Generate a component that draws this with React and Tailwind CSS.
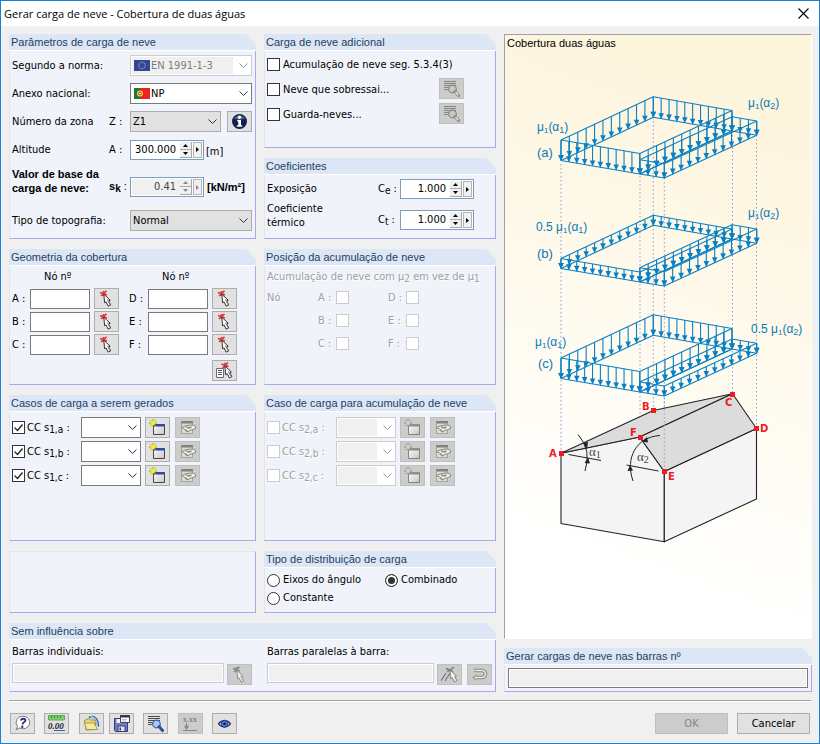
import clsx from "clsx";

const SANS = "font-['DejaVu_Sans_Condensed',Tahoma,sans-serif]";
const ARIAL = "font-['Liberation_Sans',Arial,sans-serif]";

/* ---------- icons ---------- */

function Icon({ children, className }) {
  return (
    <svg width="17" height="17" viewBox="0 0 17 17" fill="none" className={clsx("block", className)}>
      {children}
    </svg>
  );
}

function PickIcon({ muted }) {
  const star = muted ? "#8a8a8a" : "#e03a3a";
  return (
    <Icon>
      <path d="M2 2.500l7 2.500M8.500.800L3 6M5.500 1v5" stroke={star} strokeWidth="1.700" />
      <path d="M5.800 4.200l6.400 6-1.500.7 2 4-2.600 1.200-2-4.200-1.500.9z"
        fill={muted ? "#eeeeea" : "#fff"} stroke={muted ? "#8f8f88" : "#333"} strokeWidth="1" />
      <path d="M9.500 9.500l2.500 5" stroke={muted ? "#b5b5ac" : "#8a8a8a"} strokeWidth="1.300" />
    </Icon>
  );
}

function PickListIcon() {
  return (
    <Icon>
      <path d="M5.500 2l7 2.500M12 .5L6.500 6M9 .8v5" stroke="#e03a3a" strokeWidth="1.700" />
      <path d="M.5 6.500h7v9h-7z" fill="#fff" stroke="#6d6d6d" />
      <path d="M2 8.500h4M2 10.500h4M2 12.500h4" stroke="#555" />
      <path d="M9 4l6.400 6-1.500.7 2 4-2.600 1.200-2-4.200-1.800.9z" fill="#fff" stroke="#333" />
      <path d="M12.500 9.500l2.300 4.500" stroke="#8a8a8a" strokeWidth="1.300" />
    </Icon>
  );
}

function ListSearchIcon({ muted }) {
  const line = muted ? "#858585" : "#4a4a4a";
  return (
    <Icon>
      <path d="M1 1.500h12M1 3.500h12M1 5.500h12M1 7.500h5M1 9.500h4" stroke={line} strokeWidth="1" />
      <circle cx="9.500" cy="9" r="3.800" fill={muted ? "#c8c8c0" : "#a9c6f5"} stroke={muted ? "#85857c" : "#3c5f9e"} strokeWidth="1.200" />
      <path d="M12.200 11.700l3.300 3.800" stroke={muted ? "#85857c" : "#2f4f9a"} strokeWidth="3" strokeLinecap="round" />
      {muted && <path d="M12.500 12l2.800 3.200" stroke="#ecece6" strokeWidth="1.400" />}
    </Icon>
  );
}

function InfoIcon() {
  return (
    <Icon>
      <circle cx="8.500" cy="8.500" r="7.500" fill="#14204a" />
      <path d="M3 5.500a6.500 6.500 0 0 1 11 0c-2 1.500-9 1.500-11 0z" fill="#4a5d8c" />
      <circle cx="8.500" cy="4.300" r="1.700" fill="#fff" />
      <path d="M6.200 7h3.800v5.300h1.200v1.400H5.800v-1.400h1.500V8.400H6.200z" fill="#fff" />
    </Icon>
  );
}

function NewCaseIcon({ muted }) {
  return (
    <Icon>
      <defs>
        <linearGradient id="caseFill" x1="0" y1="0" x2="1" y2="1">
          <stop offset="0" stopColor="#fff" />
          <stop offset="1" stopColor="#c4c4be" />
        </linearGradient>
      </defs>
      <path d="M4.500 5.500h11v10h-11z" fill="url(#caseFill)" stroke={muted ? "#85857c" : "#45454a"} />
      <path d="M4 5h12v2.500H4z" fill={muted ? "#8f8f86" : "#2f4aa6"} />
      <path d="M4 0v8M0 4h8M1.200 1.200l5.600 5.600M6.800 1.200L1.200 6.800" stroke={muted ? "#8b8b82" : "#a8a51a"} />
      <circle cx="4" cy="4" r="2.200" fill={muted ? "#cfcfc8" : "#fff200"} />
    </Icon>
  );
}

function EditCaseIcon() {
  return (
    <Icon>
      <path d="M2.500 2.500h11v12h-11z" fill="#dcdcd4" stroke="#a5a59c" />
      <path d="M2 2h12v2.500H2z" fill="#83837a" />
      <path d="M2.500 8.500l5-2 6.500-.5 2.500 1.500v2L13 11h-2l-2 2-3.500-3z" fill="#f0f0e8" stroke="#85857c" />
      <path d="M7 8l3 1 2.500-1M6 10.500l3 2.500" stroke="#85857c" strokeWidth="1.400" />
    </Icon>
  );
}

function HelpIcon() {
  return (
    <Icon>
      <path d="M9 1.200a6.800 6.300 0 1 1-3.400 11.800L2 14.800l1.500-3.400A6.600 6.300 0 0 1 9 1.200z" fill="#fff" stroke="#7c7c7c" />
      <path d="M6.800 5.400c.6-2.300 5-2.200 4.600.2-.3 1.600-2.700 1.500-2.900 3.900" stroke="#26367e" strokeWidth="1.900" />
      <circle cx="8.300" cy="11.700" r="1.200" fill="#26367e" />
    </Icon>
  );
}

function UnitsIcon() {
  return (
    <Icon>
      <path d="M.5.5h16v4.500H.5z" fill="#7ccf6f" stroke="#5fae55" />
      <path d="M3.500 1v2M6.500 1v2M9.500 1v2M12.500 1v2" stroke="#3f8a3a" />
      <text x="0" y="14" fontSize="9" fontStyle="italic" fontWeight="bold" fill="#1f2430" fontFamily="Liberation Serif, serif">0.00</text>
      <path d="M6 15.500h11" stroke="#3f62b5" />
    </Icon>
  );
}

function OpenIcon() {
  return (
    <Icon>
      <path d="M6 2.500c5-2.500 9 .5 9.500 9" stroke="#2d4f8f" strokeWidth="1.500" />
      <path d="M7.500 2.200c4 0 6 3 6.500 8" stroke="#9cc0f0" strokeWidth="2.200" />
      <path d="M1.500 5.500l4-2 2 1.500h4.500l1 9.500-10 .5z" fill="#ead67c" stroke="#a48e3c" />
      <path d="M1.500 8h9.500l3.500 6.500H3.500z" fill="#f6ea9e" stroke="#b19c45" />
    </Icon>
  );
}

function SaveIcon() {
  return (
    <Icon>
      <path d="M1.500 3.500h13v13h-12l-1-1z" fill="#6f7ccb" stroke="#35397a" />
      <path d="M5 11h7v5.500H5z" fill="#e6e6f2" stroke="#35397a" />
      <path d="M6.500 12.500h1.500v3H6.500z" fill="#35397a" />
      <path d="M3.500 4h7v4h-7z" fill="#f3f3fa" />
      <path d="M7.500.5h9v7h-9z" fill="#fff" stroke="#444" />
      <path d="M7 .5h10v2H7z" fill="#30364e" />
      <path d="M9 4.500h5M9 6h4" stroke="#bbb" />
    </Icon>
  );
}

function ValuesIcon() {
  return (
    <svg width="21" height="19" viewBox="0 0 21 19" fill="none" className="block">
      <text x="3" y="8" fontSize="8" fontWeight="bold" fill="#85857e" fontFamily="Liberation Serif, serif">x.xx</text>
      <path d="M6.500 9v5M4.500 12l2 3.500 2-3.500zM3 16.500h14" stroke="#85857e" />
    </svg>
  );
}

function EyeIcon() {
  return (
    <Icon>
      <path d="M2.500 8.800C5 4.500 12 4.500 14.500 8.800 12 13 5 13 2.500 8.800z" fill="#c9d6f8" stroke="#20243c" strokeWidth="1.200" />
      <circle cx="8.500" cy="8.700" r="3.500" fill="#4b7bea" stroke="#1c3588" />
      <circle cx="8.500" cy="8.700" r="1.300" fill="#0b1020" />
    </Icon>
  );
}

function ParallelIcon() {
  return (
    <Icon>
      <path d="M0 15L5 7M4 15l5-8" stroke="#7c7c75" strokeWidth="1.200" />
      <path d="M5 2.500l7 3M13 1L6 6" stroke="#7c7c75" strokeWidth="1.500" />
      <path d="M9 4l6.400 6-1.500.7 2 4-2.600 1.200-2-4.200-1.800.9z" fill="#eeeeea" stroke="#85857e" />
    </Icon>
  );
}

function ReverseIcon() {
  return (
    <Icon>
      <path d="M3 4.500h8a3.300 3.300 0 0 1 0 7H5" stroke="#85857e" strokeWidth="3.600" />
      <path d="M5.500 8v7L1 11.500z" fill="#a5a59c" />
      <path d="M3.500 4.500H11a3.300 3.300 0 0 1 0 7H4" stroke="#ecece4" strokeWidth="1.600" />
    </Icon>
  );
}

function FlagEU() {
  return (
    <svg width="16" height="11" viewBox="0 0 16 11">
      <path d="M0 0h16v11H0z" fill="#3145a0" />
      <circle cx="8" cy="5.500" r="3.200" fill="none" stroke="#d8cd52" strokeDasharray="1 0.700" />
    </svg>
  );
}

function FlagPT() {
  return (
    <svg width="16" height="11" viewBox="0 0 16 11">
      <path d="M0 0h16v11H0z" fill="#e8251f" />
      <path d="M0 0h6v11H0z" fill="#1d7a35" />
      <circle cx="6" cy="5.500" r="3" fill="#f3dd3c" />
      <circle cx="6" cy="5.500" r="1.400" fill="#fff" stroke="#d22" />
    </svg>
  );
}

/* ---------- controls ---------- */

function Group({ title, wide, className, children }) {
  return (
    <section className={clsx("flex flex-col bg-[#f0f3f9] text-black", className)}>
      {title && (
        <div className="bg-[#f0f0f0]">
          <h2 className={clsx(ARIAL, "h-[17px] border-b border-white bg-[#dce6f4] pl-[2px] text-[11px] leading-4 text-[#1d3f66] [clip-path:polygon(0_0,calc(100%-10px)_0,100%_10px,100%_100%,0_100%)]")}>
            {title}
          </h2>
        </div>
      )}
      <div className={clsx("grow border-r border-b border-l border-r-[#a8a8ee] border-b-[#a8a8ee] border-l-[#dce6f4]", !title && "border-t border-t-[#dce6f4]", wide)}>
        {children}
      </div>
    </section>
  );
}

function IconButton({ label, disabled, className, children }) {
  return (
    <button
      type="button"
      aria-label={label}
      disabled={disabled}
      className={clsx("flex h-[21px] w-[25px] shrink-0 items-center justify-center border border-[#adadad] bg-[#e1e1e1] disabled:border-[#bfbfbf] disabled:bg-[#cccccc]", className)}
    >
      {children}
    </button>
  );
}

function Select({ id, label, value, flag, tone = "white", disabled, className }) {
  return (
    <div className={clsx("relative h-[21px]", className)}>
      <select
        id={id}
        aria-label={label}
        disabled={disabled}
        className={clsx(
          "block h-full w-full appearance-none border pr-4 opacity-100",
          flag ? "pl-5" : "pl-[2px]",
          disabled ? "border-[#cccccc] bg-white text-[#7d7d7d]" : "text-black",
          !disabled && tone === "white" && "border-[#7a7a7a] bg-white",
          !disabled && tone === "gray" && "border-[#adadad] bg-[#e1e1e1]",
          disabled && "bg-linear-to-r from-[#f0f0f0] from-[calc(100%-18px)] to-white to-[calc(100%-18px)] shadow-[inset_0_0_0_1px_#fff]"
        )}
      >
        <option>{value}</option>
      </select>
      {flag && <span className="pointer-events-none absolute top-[5px] left-1">{flag}</span>}
      <svg width="9" height="5" viewBox="0 0 9 5" className="pointer-events-none absolute top-2 right-1" fill="none">
        <path d="M.5.500l4 4 4-4" stroke={disabled ? "#9a9a9a" : "#333"} />
      </svg>
    </div>
  );
}

function Spinner({ id, label, value, disabled }) {
  const ink = disabled ? "#8a8a8a" : "#000";
  return (
    <div className="flex h-5 w-[74px] shrink-0 border border-[#7f9db9] bg-white p-px">
      <input
        id={id}
        aria-label={label}
        defaultValue={value}
        disabled={disabled}
        className="w-0 min-w-0 grow bg-white pr-1 text-right disabled:bg-[#f0f0f0] disabled:text-[#444]"
      />
      <div className="flex w-3 flex-col">
        <button type="button" aria-label="Aumentar" disabled={disabled} className="flex h-2 items-center justify-center border-r border-b border-[#a8a8a8] bg-[#f0f0f0]">
          <svg width="5" height="3" viewBox="0 0 5 3"><path d="M0 3L2.500 0 5 3z" fill={ink} /></svg>
        </button>
        <button type="button" aria-label="Diminuir" disabled={disabled} className="flex h-2 items-center justify-center border-r border-b border-[#a8a8a8] bg-[#f0f0f0]">
          <svg width="5" height="3" viewBox="0 0 5 3"><path d="M0 0l2.500 3L5 0z" fill={ink} /></svg>
        </button>
      </div>
      <button type="button" aria-label="Mais" disabled={disabled} className="ml-px flex w-[9px] items-center justify-center border border-[#b4b4b4] bg-[#f0f0f0]">
        <svg width="3" height="5" viewBox="0 0 3 5"><path d="M0 0l3 2.500L0 5z" fill={ink} /></svg>
      </button>
    </div>
  );
}

function Check({ id, checked, disabled }) {
  return (
    <span className="relative block size-[13px] shrink-0">
      <input
        id={id}
        type="checkbox"
        defaultChecked={checked}
        disabled={disabled}
        className="peer block size-full appearance-none border border-[#333] bg-white disabled:border-[#cccccc]"
      />
      <svg viewBox="0 0 13 13" className="pointer-events-none absolute inset-0 hidden peer-checked:block" fill="none">
        <path d="M2.500 6.500l3 3 5-6" stroke="#222" strokeWidth="1.300" />
      </svg>
    </span>
  );
}

function Radio({ id, label, checked }) {
  return (
    <div className="flex h-[18px] items-center gap-[3px]">
      <input
        id={id}
        type="radio"
        name="distribuicao"
        defaultChecked={checked}
        className="size-[13px] appearance-none rounded-full border border-[#333] bg-white checked:bg-[#333] checked:shadow-[inset_0_0_0_2px_#fff]"
      />
      <label htmlFor={id}>{label}</label>
    </div>
  );
}

function Sub({ children }) {
  return <span className="relative top-[2px] text-[10px]">{children}</span>;
}

const DISABLED_TEXT = "text-[#a0a0a0] [text-shadow:1px_1px_0_#fff]";

/* ---------- groups ---------- */

const paramRow = "grid grid-cols-[97px_21px_1fr] items-center";

function SnowParameters() {
  return (
    <Group title="Parâmetros de carga de neve" wide="flex flex-col gap-[7px] pt-1 pr-[3px] pb-[7px] pl-[2px]">
      <div className={paramRow}>
        <label htmlFor="norma" className="col-span-2">Segundo a norma:</label>
        <Select id="norma" value="EN 1991-1-3" flag={<FlagEU />} disabled />
      </div>
      <div className={paramRow}>
        <label htmlFor="anexo" className="col-span-2">Anexo nacional:</label>
        <Select id="anexo" value="NP" flag={<FlagPT />} />
      </div>
      <div className={paramRow}>
        <label htmlFor="zona">Número da zona</label>
        <span>Z :</span>
        <div className="flex justify-between gap-[6px]">
          <Select id="zona" value="Z1" tone="gray" className="grow" />
          <IconButton label="Informação da zona"><InfoIcon /></IconButton>
        </div>
      </div>
      <div className={paramRow}>
        <label htmlFor="altitude">Altitude</label>
        <span>A :</span>
        <div className="flex h-[21px] items-center gap-[2px]">
          <Spinner id="altitude" value="300.000" />
          <span className="pt-1">[m]</span>
        </div>
      </div>
      <div className={clsx(ARIAL, "grid h-[30px] grid-cols-[97px_21px_1fr] items-end font-bold")}>
        <label htmlFor="sk" className="self-start leading-[14px]">Valor de base da<br />carga de neve:</label>
        <span className="pb-[3px]">s<Sub>k</Sub> <span className="font-normal">:</span></span>
        <div className="flex items-center gap-[3px]">
          <div className={clsx(SANS, "font-normal")}><Spinner id="sk" value="0.41" disabled /></div>
          <span>[kN/m²]</span>
        </div>
      </div>
      <div className={clsx(paramRow, "mt-[6px]")}>
        <label htmlFor="topografia" className="col-span-2">Tipo de topografia:</label>
        <Select id="topografia" value="Normal" tone="gray" />
      </div>
    </Group>
  );
}

function AdditionalSnow() {
  const items = [
    { id: "acum", text: "Acumulação de neve seg. 5.3.4(3)" },
    { id: "sobressai", text: "Neve que sobressai...", details: true },
    { id: "guarda", text: "Guarda-neves...", details: true },
  ];
  return (
    <Group title="Carga de neve adicional" className="grow" wide="pt-px pr-[31px] pl-[2px]">
      {items.map((item) => (
        <div key={item.id} className="flex h-[25px] items-center gap-[3px]">
          <Check id={item.id} />
          <label htmlFor={item.id} className="grow whitespace-nowrap">{item.text}</label>
          {item.details && <IconButton label={`Detalhes ${item.text}`} disabled className="mb-[3px]"><ListSearchIcon muted /></IconButton>}
        </div>
      ))}
    </Group>
  );
}

function Coefficients() {
  return (
    <Group title="Coeficientes" wide="flex flex-col gap-[3px] pt-1 pr-[21px] pb-2 pl-[2px]">
      <div className="grid grid-cols-[1fr_22px_74px] items-center">
        <label htmlFor="ce">Exposição</label>
        <span>C<Sub>e</Sub> :</span>
        <Spinner id="ce" value="1.000" />
      </div>
      <div className="grid h-7 grid-cols-[1fr_22px_74px] items-end">
        <label htmlFor="ct" className="self-start">Coeficiente<br />térmico</label>
        <span className="leading-5">C<Sub>t</Sub> :</span>
        <Spinner id="ct" value="1.000" />
      </div>
    </Group>
  );
}

function NodeField({ name }) {
  return (
    <>
      <label htmlFor={`no-${name}`}>{name} :</label>
      <input id={`no-${name}`} className="h-5 w-[60px] border border-[#7a7a7a] bg-white px-1" />
      <IconButton label={`Selecionar nó ${name}`}><PickIcon /></IconButton>
    </>
  );
}

function RoofGeometry() {
  return (
    <Group title="Geometria da cobertura" wide="pt-[3px] pb-[3px] pl-[2px]">
      <div className="grid grid-cols-[18px_64px_35px_19px_64px_25px] items-center gap-y-[2px]">
        <span className="col-start-2 h-[17px] pl-[14px] leading-4">Nó nº</span>
        <span className="col-span-2 col-start-5 h-[17px] pl-[14px] leading-4">Nó nº</span>
        <NodeField name="A" /><NodeField name="D" />
        <NodeField name="B" /><NodeField name="E" />
        <NodeField name="C" /><NodeField name="F" />
        <div className="col-start-6 mt-[3px]">
          <IconButton label="Selecionar vários nós"><PickListIcon /></IconButton>
        </div>
      </div>
    </Group>
  );
}

function AccumulationPosition() {
  const rows = [["A", "D"], ["B", "E"], ["C", "F"]];
  return (
    <Group title="Posição da acumulação de neve" wide={clsx("pt-[3px] pl-[2px]", DISABLED_TEXT)}>
      <p className="h-[17px] leading-4 whitespace-nowrap">
        Acumulação de neve com μ<Sub>2</Sub> em vez de μ<Sub>1</Sub>
      </p>
      {rows.map((row, i) => (
        <div key={row[0]} className="grid h-[23px] grid-cols-[51px_18px_52px_18px_13px] items-center">
          <span>{i === 0 && "Nó"}</span>
          {row.map((n) => [
            <label key={n} htmlFor={`acum-${n}`}>{n} :</label>,
            <Check key={`${n}-box`} id={`acum-${n}`} disabled />,
          ])}
        </div>
      ))}
    </Group>
  );
}

function LoadCases({ title, index, disabled }) {
  return (
    <Group title={title} className="min-h-[146px]" wide="flex flex-col gap-[3px] pt-[5px] pl-[2px]">
      {["a", "b", "c"].map((k) => (
        <div key={k} className="flex h-[21px] items-center">
          <Check id={`cc-${index}${k}`} checked={!disabled} disabled={disabled} />
          <label htmlFor={`cc-${index}${k}`} className={clsx("ml-[2px] w-[54px] whitespace-nowrap", disabled && DISABLED_TEXT)}>
            CC s<Sub>{index},{k}</Sub> :
          </label>
          <Select label={`Caso de carga ${index}${k}`} value="" disabled={disabled} className="mr-1 w-[60px]" />
          <div className="flex gap-[5px]">
            <IconButton label="Novo caso" disabled={disabled}><NewCaseIcon muted={disabled} /></IconButton>
            <IconButton label="Editar caso" disabled><EditCaseIcon /></IconButton>
          </div>
        </div>
      ))}
    </Group>
  );
}

function NoInfluence() {
  const field = "h-5 min-w-0 grow border border-[#cccccc] bg-[#f0f0f0] shadow-[inset_0_0_0_1px_#fff]";
  return (
    <Group title="Sem influência sobre" className="col-span-2" wide="pt-1 pb-[6px]">
      <div className="grid grid-cols-[247fr_232fr] gap-2">
        <div className="pl-[2px]">
          <label htmlFor="individuais" className="mb-[3px] block leading-4">Barras individuais:</label>
          <div className="flex items-start gap-[3px] pr-1">
            <input id="individuais" disabled className={field} />
            <IconButton label="Selecionar barras" disabled className="mt-px"><PickIcon muted /></IconButton>
          </div>
        </div>
        <div className="pl-[3px]">
          <label htmlFor="paralelas" className="mb-[3px] block leading-4">Barras paralelas à barra:</label>
          <div className="flex items-start gap-[3px] pr-[3px]">
            <input id="paralelas" disabled className={field} />
            <div className="flex gap-[5px] pt-px">
              <IconButton label="Selecionar paralelas" disabled><ParallelIcon /></IconButton>
              <IconButton label="Inverter" disabled><ReverseIcon /></IconButton>
            </div>
          </div>
        </div>
      </div>
    </Group>
  );
}

/* ---------- roof drawing ---------- */

const BASE = {
  A: [561, 160.5],
  B: [653.3, 117.3],
  C: [732, 131],
  D: [756.7, 135.3],
  E: [664.3, 178],
  F: [639.8, 174],
};

function LoadEdge({ from, to, h, n, dy }) {
  const [x1, y1] = BASE[from];
  const [x2, y2] = BASE[to];
  const arrows = Array.from({ length: n + 1 }, (_, i) => [x1 + ((x2 - x1) * i) / n, y1 + dy + ((y2 - y1) * i) / n]);
  return (
    <g>
      <path d={`M${x1} ${y1 + dy}L${x2} ${y2 + dy}M${x1} ${y1 + dy - h}L${x2} ${y2 + dy - h}`} />
      {arrows.map(([x, y], i) => (
        <g key={i}>
          <path d={`M${x} ${y - h}V${y}`} />
          <path d={`M${x - 2.8} ${y - 5.5}h5.6L${x} ${y + 0.3}z`} fill="#0a80c4" stroke="none" />
        </g>
      ))}
    </g>
  );
}

function SnowLoad({ dy, left, right }) {
  return (
    <g stroke="#0a80c4" strokeWidth="1.100" fill="none">
      <LoadEdge from="A" to="B" h={left} n={11} dy={dy} />
      <LoadEdge from="B" to="C" h={left} n={10} dy={dy} />
      <LoadEdge from="A" to="F" h={left} n={10} dy={dy} />
      <LoadEdge from="F" to="C" h={left} n={11} dy={dy} />
      <LoadEdge from="F" to="C" h={right} n={11} dy={dy} />
      <LoadEdge from="C" to="D" h={right} n={3} dy={dy} />
      <LoadEdge from="F" to="E" h={right} n={3} dy={dy} />
      <LoadEdge from="E" to="D" h={right} n={11} dy={dy} />
    </g>
  );
}

function Mu({ x, y, factor, slope }) {
  return (
    <text x={x} y={y}>
      {factor && `${factor} `}μ<tspan fontSize="8" dy="2">1</tspan>
      <tspan dy="-2">(α</tspan>
      <tspan fontSize="9" dy="2">{slope}</tspan>
      <tspan dy="-2">)</tspan>
    </text>
  );
}

const CORNERS = [
  ["A", 561, 453, 549, 457],
  ["B", 653, 410, 642, 410],
  ["C", 732, 394, 725, 406],
  ["D", 756, 428, 760, 432],
  ["E", 664, 471, 668, 480],
  ["F", 640, 437, 630, 436],
];

function RoofDrawing() {
  return (
    <svg viewBox="505 51 306 587" className="block w-full">
      <g stroke="#8d9bd6" strokeWidth="1" strokeDasharray="1.500 2.500">
        <path d="M561 164V453M640 176V437M653.300 117V410M664.300 178V471M732.500 131V394M756.500 135V428" />
      </g>
      <SnowLoad dy={0} left={20.5} right={14.3} />
      <SnowLoad dy={108} left={10} right={14.3} />
      <SnowLoad dy={218} left={20.5} right={10} />
      <g stroke="#222" strokeWidth="1.100" strokeLinejoin="round">
        <path d="M561 453.300L639.700 437 664.300 471.500V541.700L561 523.500z" fill="#f4f4f4" />
        <path d="M664.300 471.500L756.500 428.500V499L664.300 541.700z" fill="#f4f4f4" />
        <path d="M561 453.300L653.300 410.500 732.500 393.700 639.700 437z" fill="#dcdcdc" />
        <path d="M639.700 437L732.500 393.700 756.500 428.500 664.300 471.500z" fill="#dcdcdc" />
      </g>
      <path d="M664.300 397V471" stroke="#8d9bd6" strokeDasharray="1.500 2.500" />
      <g stroke="#222" fill="none">
        <path d="M578 434.500Q592 450 585 471M568.500 454.500L601 460.500" />
        <path d="M660 435.500C636 437 625 458 633 481M626.500 465L658.500 471" />
      </g>
      <g fill="#222">
        <path d="M583 443l5-1-1 7z" />
        <path d="M584.500 463l5.500.5-2-6z" />
        <path d="M647 437l1 5.500-6-1z" />
        <path d="M627.500 471l5.500-.5-3-5.500z" />
      </g>
      <g fill="#444" fontSize="13" fontFamily="Liberation Serif, serif">
        <text x="589" y="456">α<tspan fontSize="10" dy="2">1</tspan></text>
        <text x="637" y="461">α<tspan fontSize="10" dy="2">2</tspan></text>
      </g>
      <g fill="#ed1c24" fontSize="10" fontWeight="bold" fontFamily="DejaVu Sans, sans-serif">
        {CORNERS.map(([name, x, y, tx, ty]) => (
          <g key={name}>
            <rect x={x - 2} y={y - 2} width="5" height="5" />
            <text x={tx} y={ty}>{name}</text>
          </g>
        ))}
      </g>
      <g fill="#0a7ab8" fontSize="12" fontFamily="Liberation Sans, sans-serif">
        <Mu x={537} y={131} slope="1" />
        <Mu x={748} y={107} slope="2" />
        <text x="537" y="157" fontSize="13">(a)</text>
        <Mu x={536} y={231} factor="0.5" slope="1" />
        <Mu x={748} y={217} slope="2" />
        <text x="537" y="258" fontSize="13">(b)</text>
        <Mu x={535} y={346} slope="1" />
        <Mu x={751} y={333} factor="0.5" slope="2" />
        <text x="538" y="368" fontSize="13">(c)</text>
      </g>
    </svg>
  );
}

/* ---------- window ---------- */

function Footer() {
  const action = "h-[21px] w-[73px] border border-[#adadad] bg-[#e1e1e1] disabled:border-[#bfbfbf] disabled:bg-[#cccccc] disabled:text-[#838383]";
  return (
    <footer className="mt-2 mr-2 ml-2 flex items-center justify-between border-t border-[#a0a0a0] pt-3 pr-px pb-2 pl-px shadow-[inset_0_1px_0_#fff]">
      <div className="flex gap-[9px]">
        <IconButton label="Ajuda"><HelpIcon /></IconButton>
        <IconButton label="Unidades"><UnitsIcon /></IconButton>
        <div className="ml-px flex gap-[5px]">
          <IconButton label="Abrir"><OpenIcon /></IconButton>
          <IconButton label="Salvar"><SaveIcon /></IconButton>
        </div>
        <IconButton label="Detalhes"><ListSearchIcon /></IconButton>
        <div className="ml-px flex"><IconButton label="Valores" disabled><ValuesIcon /></IconButton></div>
        <IconButton label="Visualizar"><EyeIcon /></IconButton>
      </div>
      <div className="flex gap-[9px]">
        <button type="button" disabled className={action}>OK</button>
        <button type="button" className={action}>Cancelar</button>
      </div>
    </footer>
  );
}

export default function App() {
  return (
    <main className={clsx(SANS, "min-h-screen border border-[#1883d7] bg-[#f0f0f0] text-[11px] leading-[14px] text-black")}>
      <header className="flex h-[25px] items-center justify-between bg-white pr-[10px] pl-[3px]">
        <h1 className="font-['Open_Sans','Noto_Sans',sans-serif] text-[11px]">Gerar carga de neve - Cobertura de duas águas</h1>
        <button type="button" aria-label="Fechar">
          <svg width="11" height="11" viewBox="0 0 11 11"><path d="M.5.500l10 10M10.500.500l-10 10" stroke="#000" strokeWidth="1.100" /></svg>
        </button>
      </header>

      <div className="grid grid-cols-[487fr_308fr] gap-2 pt-2 pr-[7px] pl-2">
        <div className="grid grid-cols-[247fr_232fr] content-start gap-x-2 gap-y-[10px]">
          <SnowParameters />
          <div className="flex flex-col gap-[10px]">
            <AdditionalSnow />
            <Coefficients />
          </div>
          <RoofGeometry />
          <AccumulationPosition />
          <LoadCases title="Casos de carga a serem gerados" index="1" />
          <LoadCases title="Caso de carga para acumulação de neve" index="2" disabled />
          <Group />
          <Group title="Tipo de distribuição de carga" wide="grid grid-cols-[118px_1fr] content-start pt-[3px] pb-[5px] pl-[2px]">
            <Radio id="eixos" label="Eixos do ângulo" />
            <Radio id="combinado" label="Combinado" checked />
            <Radio id="constante" label="Constante" />
          </Group>
          <NoInfluence />
        </div>

        <div className="flex flex-col gap-[9px]">
          <figure className="grow border border-t-[#a0a0a0] border-r-white border-b-white border-l-[#a0a0a0] bg-[linear-gradient(20deg,#fff_15%,#fefaee_50%,#fdf4dc_90%)]">
            <figcaption className={clsx(ARIAL, "h-4 pl-[2px] leading-4")}>Cobertura duas águas</figcaption>
            <RoofDrawing />
          </figure>
          <Group title="Gerar cargas de neve nas barras nº" wide="p-[3px]">
            <input aria-label="Gerar cargas de neve nas barras nº" className="block h-5 w-full border border-[#7a7a7a] bg-[#f0f0f0] px-1 shadow-[inset_0_0_0_1px_#fff]" />
          </Group>
        </div>
      </div>

      <Footer />
    </main>
  );
}
